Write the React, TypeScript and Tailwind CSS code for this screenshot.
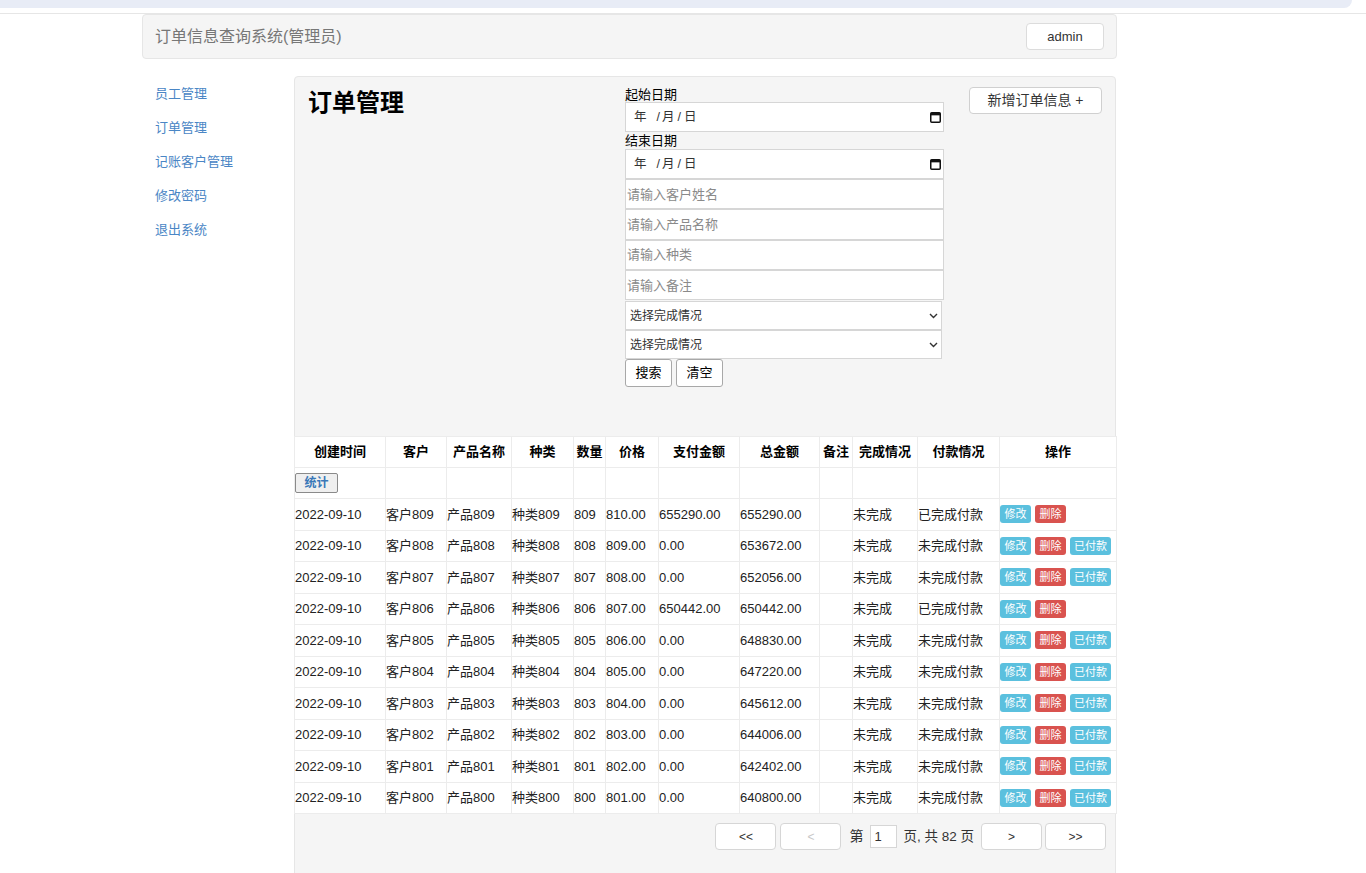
import { useState } from "react";

type OrderRow = {
  id: number;
  paid: boolean;
};

const ORDERS: OrderRow[] = [809, 808, 807, 806, 805, 804, 803, 802, 801, 800].map((id) => ({
  id,
  paid: id === 809 || id === 806,
}));

const NAV_ITEMS = ["员工管理", "订单管理", "记账客户管理", "修改密码", "退出系统"];

const HEADERS = ["创建时间", "客户", "产品名称", "种类", "数量", "价格", "支付金额", "总金额", "备注", "完成情况", "付款情况", "操作"];

function CalendarIcon() {
  return (
    <svg width="11" height="11" viewBox="0 0 11 11" className="shrink-0">
      <rect x="0.75" y="0.75" width="9.5" height="9.5" rx="1" fill="none" stroke="#111" strokeWidth="1.5" />
      <rect x="0.75" y="0.75" width="9.5" height="2.6" fill="#111" />
    </svg>
  );
}

function DateField() {
  return (
    <div className="flex h-[30px] items-center justify-between border border-[#d6d6d6] bg-white pl-[8px] pr-[2px] text-[12.5px] text-[#333]">
      <span className="flex items-center">
        <span>年</span>
        <span className="ml-[10px]">/</span>
        <span className="ml-[2px]">月</span>
        <span className="ml-[3px]">/</span>
        <span className="ml-[3px]">日</span>
      </span>
      <CalendarIcon />
    </div>
  );
}

function SelectField() {
  const [value, setValue] = useState("");

  return (
    <div className="relative w-[317px]">
      <select
        value={value}
        onChange={(e) => setValue(e.target.value)}
        className="h-[29px] w-full appearance-none border border-[#d6d6d6] bg-white pl-[4px] text-[12px] text-[#333] outline-none"
      >
        <option value="">选择完成情况</option>
        <option value="done">已完成</option>
        <option value="todo">未完成</option>
      </select>
      <svg width="9" height="6" viewBox="0 0 9 6" className="pointer-events-none absolute right-[4px] top-[12px]">
        <path d="M1 1l3.5 3.5L8 1" fill="none" stroke="#333" strokeWidth="1.4" />
      </svg>
    </div>
  );
}

const cell = "border border-[#ececec] px-0";

export default function App() {
  const [page] = useState(1);

  return (
    <div className="min-h-screen bg-white font-['Liberation_Sans','Noto_Sans_CJK_SC',sans-serif] text-[#333]">
      <div className="h-[8px] w-[1352px] rounded-br-[10px] bg-[#e8ecf6]" />
      <div className="h-[5px]" />
      <div className="h-px bg-[#e6e6e6]" />

      <div className="ml-[142px] w-[975px]">
        <header className="flex h-[45px] items-center justify-between rounded-[4px] border border-[#e6e6e6] bg-[#f5f5f5] pl-[12px] pr-[12px]">
          <h1 className="text-[16px] text-[#777]">订单信息查询系统(管理员)</h1>
          <button
            type="button"
            className="h-[27px] w-[78px] rounded-[4px] border border-[#dcdcdc] bg-white text-[13px] text-[#333]"
          >
            admin
          </button>
        </header>

        <div className="mt-[17px] flex">
          <nav className="flex w-[152px] flex-col pl-[13px] pt-px">
            {NAV_ITEMS.map((item) => (
              <a key={item} href="#" className="flex h-[34px] items-center text-[13px] text-[#4a86c5]">
                {item}
              </a>
            ))}
          </nav>

          <main className="w-[822px] rounded-t-[4px] border border-[#e6e6e6] bg-[#f5f5f5] pb-[40px]">
            <section className="flex px-[13px] pb-[49px] pt-[10px]">
              <div className="w-[317px]">
                <h2 className="text-[24px] font-bold leading-[32px] text-black">订单管理</h2>
              </div>

              <div className="flex w-[319px] flex-col">
                <label className="text-[13px] leading-[15px] text-black">起始日期</label>
                <DateField />
                <label className="text-[13px] leading-[17px] text-black">结束日期</label>
                <DateField />
                {["请输入客户姓名", "请输入产品名称", "请输入种类", "请输入备注"].map((ph) => (
                  <input
                    key={ph}
                    placeholder={ph}
                    className="h-[30.3px] border border-[#d6d6d6] bg-white px-[1px] text-[13px] outline-none placeholder:text-[#8a8a8a]"
                  />
                ))}
                <div className="mt-px">
                  <SelectField />
                </div>
                <SelectField />
                <div className="flex gap-[4px]">
                  <button
                    type="button"
                    className="h-[28px] w-[47px] rounded-[3px] border border-[#a8a8a8] bg-white text-[13px] text-black"
                  >
                    搜索
                  </button>
                  <button
                    type="button"
                    className="h-[28px] w-[47px] rounded-[3px] border border-[#a8a8a8] bg-white text-[13px] text-black"
                  >
                    清空
                  </button>
                </div>
              </div>

              <div className="flex flex-1 justify-end">
                <button
                  type="button"
                  className="h-[27px] w-[133px] rounded-[4px] border border-[#d0d0d0] bg-white text-[14px] text-[#333]"
                >
                  新增订单信息 +
                </button>
              </div>
            </section>

            <table className="-mx-px w-[822px] table-fixed border-collapse bg-white text-[13px]">
              <colgroup>
                <col className="w-[91px]" />
                <col className="w-[61px]" />
                <col className="w-[65px]" />
                <col className="w-[62px]" />
                <col className="w-[32px]" />
                <col className="w-[53px]" />
                <col className="w-[81px]" />
                <col className="w-[80px]" />
                <col className="w-[33px]" />
                <col className="w-[65px]" />
                <col className="w-[82px]" />
                <col className="w-[117px]" />
              </colgroup>
              <thead>
                <tr className="h-[31px]">
                  {HEADERS.map((h) => (
                    <th key={h} className="border border-[#ececec] px-0 text-center font-bold text-black">
                      {h}
                    </th>
                  ))}
                </tr>
              </thead>
              <tbody>
                <tr className="h-[31px]">
                  <td className={cell}>
                    <button
                      type="button"
                      className="h-[20px] w-[43px] rounded-[2px] border border-[#8a8a8a] bg-[#efefef] text-[12px] font-bold text-[#3a78b8]"
                    >
                      统计
                    </button>
                  </td>
                  {HEADERS.slice(1).map((h) => (
                    <td key={h} className={cell} />
                  ))}
                </tr>
                {ORDERS.map((order) => {
                  const total = order.id * (order.id + 1);

                  return (
                    <tr key={order.id} className="h-[31.5px] text-[#222]">
                      <td className={cell}>2022-09-10</td>
                      <td className={cell}>客户{order.id}</td>
                      <td className={cell}>产品{order.id}</td>
                      <td className={cell}>种类{order.id}</td>
                      <td className={cell}>{order.id}</td>
                      <td className={cell}>{order.id + 1}.00</td>
                      <td className={cell}>{order.paid ? `${total}.00` : "0.00"}</td>
                      <td className={cell}>{total}.00</td>
                      <td className={cell} />
                      <td className={cell}>未完成</td>
                      <td className={cell}>{order.paid ? "已完成付款" : "未完成付款"}</td>
                      <td className={cell}>
                        <div className="flex gap-[4px]">
                          <span className="flex h-[18px] w-[31px] items-center justify-center rounded-[3px] bg-[#5bc0de] text-[11px] text-white">
                            修改
                          </span>
                          <span className="flex h-[18px] w-[31px] items-center justify-center rounded-[3px] bg-[#d9534f] text-[11px] text-white">
                            删除
                          </span>
                          {!order.paid && (
                            <span className="flex h-[18px] w-[41px] items-center justify-center rounded-[3px] bg-[#5bc0de] text-[11px] text-white">
                              已付款
                            </span>
                          )}
                        </div>
                      </td>
                    </tr>
                  );
                })}
              </tbody>
            </table>

            <div className="flex items-center justify-end pr-[9px] pt-[9px] text-[14px] text-[#333]">
              <button type="button" className="h-[27px] w-[61px] rounded-[4px] border border-[#d6d6d6] bg-white text-[12px] text-[#333]">
                &lt;&lt;
              </button>
              <button type="button" className="ml-[4px] h-[27px] w-[61px] rounded-[4px] border border-[#d6d6d6] bg-white text-[12px] text-[#c8c8c8]">
                &lt;
              </button>
              <span className="ml-[8px]">第</span>
              <input
                value={page}
                readOnly
                className="ml-[7px] h-[23px] w-[27px] border border-[#d6d6d6] bg-white px-[3px] text-[13px] outline-none"
              />
              <span className="ml-[6px] text-[13.5px]">页, 共 82 页</span>
              <button type="button" className="ml-[7px] h-[27px] w-[61px] rounded-[4px] border border-[#d6d6d6] bg-white text-[12px] text-[#333]">
                &gt;
              </button>
              <button type="button" className="ml-[3px] h-[27px] w-[61px] rounded-[4px] border border-[#d6d6d6] bg-white text-[12px] text-[#333]">
                &gt;&gt;
              </button>
            </div>
          </main>
        </div>
      </div>
    </div>
  );
}
